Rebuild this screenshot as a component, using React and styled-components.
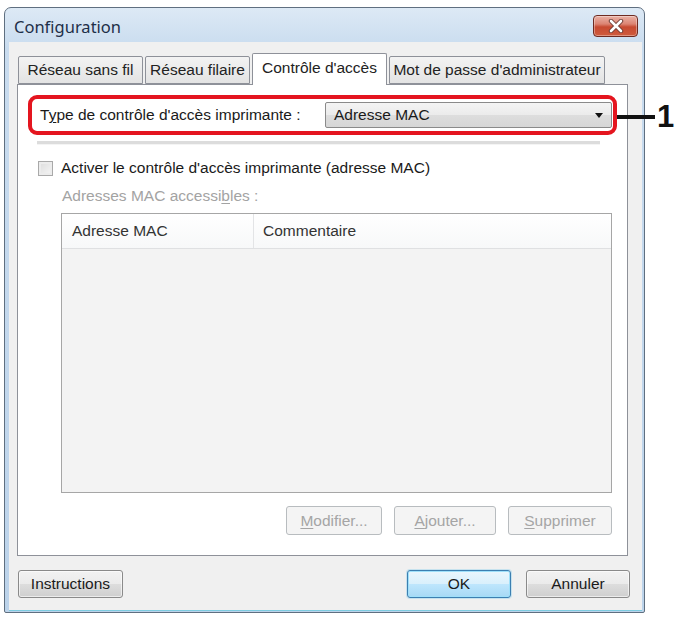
import styled, { createGlobalStyle } from "styled-components";

const GlobalStyle = createGlobalStyle`
    html, body {
        margin: 0;
        padding: 0;
        background: #ffffff;
    }
    body {
        font-family: "Liberation Sans", Arial, sans-serif;
        font-size: 15.5px;
        color: #1a1a1a;
    }
`

const Page = styled.div`
    position: relative;
    width: 682px;
    height: 618px;
    padding: 7px 0 0 4px;
    box-sizing: border-box;
`

const Window = styled.div`
    width: 641px;
    height: 606px;
    box-sizing: border-box;
    border: 1px solid #5f6f80;
    border-radius: 7px 7px 2px 2px;
    background: linear-gradient(to bottom, #dde9f5 0px, #c9dcef 40px, #bcd3ea 100%);
    display: flex;
    flex-direction: column;
    padding: 0 2px 2px 4px;
    overflow: hidden;
`

const TitleBar = styled.div`
    height: 34px;
    display: flex;
    align-items: flex-start;
    justify-content: space-between;
    padding: 0 4px 0 5px;
    flex-shrink: 0;
`

const Title = styled.div`
    font-family: "Noto Sans", "Open Sans", sans-serif;
    font-size: 16.5px;
    color: #1e2f48;
    line-height: 20px;
    margin-top: 9px;
`

const CloseButton = styled.div`
    width: 45px;
    height: 22px;
    margin-top: 7px;
    box-sizing: border-box;
    border: 1px solid #6e2b22;
    border-radius: 4px;
    background: linear-gradient(to bottom, #eab2a6 0%, #dc8473 40%, #c74a31 55%, #cf5c3e 100%);
    display: flex;
    align-items: center;
    justify-content: center;
    box-shadow: inset 0 0 0 1px rgba(255, 255, 255, 0.35);
`

const Client = styled.div`
    flex: 1;
    background: #f0f0f0;
    border-bottom: 1px solid #7ccbe0;
    display: flex;
    flex-direction: column;
    padding: 0 12px 12px 8px;
    box-sizing: border-box;
`

const TabRow = styled.div`
    display: flex;
    align-items: flex-end;
    gap: 2px;
    height: 31px;
    margin-top: 11px;
    padding-left: 1px;
    position: relative;
    z-index: 1;
`

const Tab = styled.div`
    width: ${p => p.$w}px;
    height: ${p => (p.$active ? 32 : 28)}px;
    box-sizing: border-box;
    border: 1px solid #8e9199;
    border-bottom: ${p => (p.$active ? "none" : "1px solid #8e9199")};
    border-radius: 2px 2px 0 0;
    background: ${p => (p.$active ? "#ffffff" : "linear-gradient(to bottom, #f3f3f3, #e3e3e3)")};
    display: flex;
    align-items: center;
    justify-content: center;
    font-size: 15.5px;
    color: #222;
    margin-bottom: ${p => (p.$active ? "-1px" : "0")};
    padding-bottom: ${p => (p.$active ? "4px" : "0")};
    white-space: nowrap;
`

const Panel = styled.div`
    width: 611px;
    height: 472px;
    box-sizing: border-box;
    border: 1px solid #8e9199;
    background: #ffffff;
    display: flex;
    flex-direction: column;
`

const HighlightBox = styled.div`
    margin: 10px 10px 0 10px;
    height: 40px;
    box-sizing: border-box;
    border: 4px solid #e4151f;
    border-radius: 9px;
    display: flex;
    align-items: center;
    justify-content: space-between;
    padding: 0 0 0 8px;
`

const Label = styled.span`
    font-size: 15.5px;
    color: ${p => (p.$disabled ? "#a3a3a3" : "#1a1a1a")};
    white-space: nowrap;
`

const Combo = styled.div`
    width: 287px;
    height: 26px;
    margin-right: 1px;
    box-sizing: border-box;
    border: 1px solid #8a8a8a;
    border-radius: 2px;
    background: linear-gradient(to bottom, #f4f4f4 0%, #ebebeb 50%, #dddddd 51%, #d6d6d6 100%);
    display: flex;
    align-items: center;
    justify-content: space-between;
    padding: 0 8px 0 8px;
    font-size: 15.5px;
`

const Arrow = styled.span`
    width: 0;
    height: 0;
    border-left: 4px solid transparent;
    border-right: 4px solid transparent;
    border-top: 5px solid #111;
`

const Separator = styled.div`
    margin: 6px 27px 0 19px;
    height: 3px;
    background: #dcdcdc;
    border-bottom: 1px solid #f4f4f4;
`

const CheckRow = styled.div`
    display: flex;
    align-items: center;
    gap: 8px;
    height: 18px;
    margin: 14px 0 0 20px;
`

const CheckBox = styled.div`
    width: 15px;
    height: 15px;
    box-sizing: border-box;
    border: 1px solid #a9a9a9;
    background: linear-gradient(135deg, #dcdcdc, #f6f6f6);
    box-shadow: inset 0 0 0 2px #ececec;
`

const SubLabel = styled(Label)`
    display: block;
    height: 18px;
    line-height: 18px;
    margin: 10px 0 0 44px;
`

const ListView = styled.div`
    margin: 8px 15px 0 43px;
    height: 280px;
    box-sizing: border-box;
    border: 1px solid #a6a6a6;
    background: #f3f3f3;
    display: flex;
    flex-direction: column;
`

const ListHeader = styled.div`
    height: 34px;
    display: flex;
    background: linear-gradient(to bottom, #ffffff, #f7f8f9);
    border-bottom: 1px solid #dfe0e2;
`

const HeaderCell = styled.div`
    width: ${p => (p.$w ? `${p.$w}px` : "auto")};
    flex: ${p => (p.$w ? "none" : 1)};
    box-sizing: border-box;
    display: flex;
    align-items: center;
    padding-left: ${p => p.$pad}px;
    border-right: ${p => (p.$w ? "1px solid #e3e4e6" : "none")};
    font-size: 15.5px;
    color: #333;
`

const ButtonRow = styled.div`
    display: flex;
    justify-content: flex-end;
    gap: ${p => p.$gap}px;
    margin: ${p => p.$margin};
`

const Button = styled.div`
    width: ${p => p.$w}px;
    height: ${p => p.$h}px;
    box-sizing: border-box;
    border-radius: 3px;
    display: flex;
    align-items: center;
    justify-content: center;
    font-size: 15.5px;
    ${p =>
        p.$disabled
            ? `
        border: 1px solid #b8bcbf;
        background: #f4f4f4;
        color: #a5a5a5;
    `
            : p.$default
            ? `
        border: 1px solid #3c7fb1;
        background: linear-gradient(to bottom, #eaf6fd 0%, #d9f0fc 50%, #bee6fd 51%, #a7d9f5 100%);
        box-shadow: inset 0 0 0 1px #9fe0fa, 0 0 0 1px rgba(120, 200, 235, 0.35);
        color: #1a1a1a;
    `
            : `
        border: 1px solid #8a8a8a;
        background: linear-gradient(to bottom, #f2f2f2 0%, #ebebeb 50%, #dddddd 51%, #cfcfcf 100%);
        box-shadow: inset 0 0 0 1px rgba(255, 255, 255, 0.6);
        color: #1a1a1a;
    `}
`

const Footer = styled.div`
    display: flex;
    align-items: center;
    margin-top: 14px;
    padding-left: 1px;
`

const Spacer = styled.div`
    flex: 1;
`

const Callout = styled.div`
    position: absolute;
    left: 617px;
    top: 99px;
    height: 36px;
    display: flex;
    align-items: center;
`

const CalloutLine = styled.div`
    width: 38px;
    height: 4px;
    background: #111;
`

const CalloutNumber = styled.span`
    font-family: "Liberation Sans", Arial, sans-serif;
    font-weight: bold;
    font-size: 31px;
    color: #111;
    margin-left: 2px;
    line-height: 36px;
`

const Mnemonic = styled.u`
    text-decoration-thickness: 1px;
    text-underline-offset: 2px;
`

const CloseIcon = () => (
    <svg width="16" height="14" viewBox="0 0 16 14">
        <path d="M3 2 L13 12 M13 2 L3 12" stroke="#6b3a33" strokeWidth="4.4" strokeLinecap="round" />
        <path d="M3 2 L13 12 M13 2 L3 12" stroke="#ffffff" strokeWidth="2.6" strokeLinecap="round" />
    </svg>
)

const tabs = [
    { label: "Réseau sans fil", w: 125 },
    { label: "Réseau filaire", w: 105 },
    { label: "Contrôle d'accès", w: 135, active: true },
    { label: "Mot de passe d'administrateur", w: 216 },
]

export default function App() {
    return (
        <>
            <GlobalStyle />
            <Page>
                <Window>
                    <TitleBar>
                        <Title>Configuration</Title>
                        <CloseButton>
                            <CloseIcon />
                        </CloseButton>
                    </TitleBar>
                    <Client>
                        <TabRow>
                            {tabs.map(t => (
                                <Tab key={t.label} $w={t.w} $active={t.active}>
                                    {t.label}
                                </Tab>
                            ))}
                        </TabRow>
                        <Panel>
                            <HighlightBox>
                                <Label>
                                    T<Mnemonic>y</Mnemonic>pe de contrôle d'accès imprimante :
                                </Label>
                                <Combo>
                                    <span>Adresse MAC</span>
                                    <Arrow />
                                </Combo>
                            </HighlightBox>
                            <Separator />
                            <CheckRow>
                                <CheckBox />
                                <Label>Activer le contrôle d'accès imprimante (adresse MAC)</Label>
                            </CheckRow>
                            <SubLabel $disabled>
                                Adresses MAC accessi<Mnemonic>b</Mnemonic>les :
                            </SubLabel>
                            <ListView>
                                <ListHeader>
                                    <HeaderCell $w={192} $pad={10}>Adresse MAC</HeaderCell>
                                    <HeaderCell $pad={9}>Commentaire</HeaderCell>
                                </ListHeader>
                            </ListView>
                            <ButtonRow $gap={12} $margin="13px 15px 0 0">
                                <Button $w={96} $h={29} $disabled>
                                    <span><Mnemonic>M</Mnemonic>odifier...</span>
                                </Button>
                                <Button $w={102} $h={29} $disabled>
                                    <span><Mnemonic>A</Mnemonic>jouter...</span>
                                </Button>
                                <Button $w={104} $h={29} $disabled>
                                    <span><Mnemonic>S</Mnemonic>upprimer</span>
                                </Button>
                            </ButtonRow>
                        </Panel>
                        <Footer>
                            <Button $w={105} $h={28}>Instructions</Button>
                            <Spacer />
                            <Button $w={104} $h={28} $default>OK</Button>
                            <Button $w={104} $h={28} style={{ marginLeft: 15 }}>Annuler</Button>
                        </Footer>
                    </Client>
                </Window>
                <Callout>
                    <CalloutLine />
                    <CalloutNumber>1</CalloutNumber>
                </Callout>
            </Page>
        </>
    )
}
